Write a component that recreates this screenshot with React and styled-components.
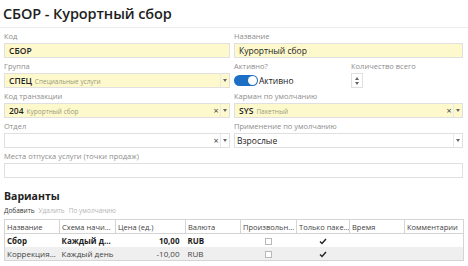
import React from 'react';
import styled, { createGlobalStyle } from 'styled-components';

const GlobalStyle = createGlobalStyle`
    body {
        margin: 0;
        background: #ffffff;
        font-family: "Open Sans", "Noto Sans", sans-serif;
        color: #222;
    }
`;

const Page = styled.div`
    width: 468px;
    height: 266px;
    overflow: hidden;
`;

const Header = styled.div`
    height: 27px;
    border-bottom: 1px solid #ececec;
    padding-left: 3px;
    display: flex;
    align-items: center;
`;

const Title = styled.h1`
    margin: 0;
    font-size: 14.5px;
    font-weight: 600;
    letter-spacing: -0.1px;
    color: #1e1e1e;
`;

const Body = styled.div`
    padding: 2px 5px 0 4px;
`;

const FormGrid = styled.div`
    display: grid;
    grid-template-columns: 226px 229px;
    column-gap: 4px;
    row-gap: 2px;
`;

const Field = styled.div`
    grid-column: ${p => (p.$wide ? '1 / 3' : 'auto')};
    display: flex;
    flex-direction: column;
`;

const SplitCell = styled.div`
    display: grid;
    grid-template-columns: 117px 1fr;
`;

const Label = styled.div`
    height: 13px;
    line-height: 13px;
    font-size: 7.5px;
    color: #8d8d8d;
    white-space: nowrap;
`;

const InputBox = styled.div`
    height: 15px;
    box-sizing: border-box;
    border: 1px solid #e0e0e0;
    background: ${p => (p.$filled ? '#fdf9cc' : '#ffffff')};
    display: flex;
    align-items: center;
    padding-left: ${p => p.$pad ?? 4}px;
    font-size: 8.5px;
    color: #222;
`;

const Value = styled.span`
    flex: 1;
    white-space: nowrap;
    overflow: hidden;
    font-weight: ${p => (p.$strong ? 600 : 400)};
`;

const Code = styled.span`
    font-weight: 600;
`;

const Hint = styled.span`
    font-size: 6.5px;
    color: #9a9a7a;
    margin-left: 3px;
    font-weight: 400;
`;

const ClearBtn = styled.span`
    width: 8px;
    height: 100%;
    display: flex;
    align-items: center;
    justify-content: center;
    font-size: 9px;
    color: #444;
`;

const ArrowBtn = styled.span`
    width: 8px;
    height: 100%;
    border-left: 1px solid #e8e8e8;
    display: flex;
    align-items: center;
    justify-content: center;
`;

const Toggle = styled.div`
    display: flex;
    align-items: center;
    height: 15px;
    gap: 1px;
    font-size: 8.5px;
    color: #222;
`;

const Switch = styled.span`
    width: 24px;
    height: 11px;
    border-radius: 6px;
    background: #1d6ec5;
    display: flex;
    align-items: center;
    justify-content: flex-end;
    padding-right: 1px;
    box-sizing: border-box;
`;

const Knob = styled.span`
    width: 9px;
    height: 9px;
    border-radius: 50%;
    background: #ffffff;
`;

const Spinner = styled.div`
    width: 12px;
    height: 15px;
    box-sizing: border-box;
    border: 1px solid #e0e0e0;
    display: flex;
    flex-direction: column;
    align-items: center;
    justify-content: center;
    gap: 2px;
`;

const SectionTitle = styled.h2`
    margin: 11px 0 0 0;
    font-size: 10.5px;
    font-weight: 700;
    line-height: 14px;
    color: #222;
`;

const Toolbar = styled.div`
    display: flex;
    gap: 4px;
    height: 12px;
    margin-top: 1px;
    align-items: center;
    font-size: 6.5px;
`;

const ToolAction = styled.span`
    color: ${p => (p.$disabled ? '#b4b4b4' : '#333')};
`;

const Table = styled.table`
    margin-top: 3px;
    width: 459px;
    table-layout: fixed;
    border-collapse: collapse;
    border: 1px solid #d4d4d4;
    font-size: 8px;
`;

const Th = styled.th`
    height: 13px;
    padding: 0 2px;
    font-size: 7.5px;
    font-weight: 400;
    color: #444;
    text-align: left;
    white-space: nowrap;
    overflow: hidden;
    border: 1px solid #d4d4d4;
`;

const Row = styled.tr`
    background: ${p => (p.$alt ? '#efefef' : '#ffffff')};
    font-weight: ${p => (p.$bold ? 700 : 400)};
    color: ${p => (p.$bold ? '#1e1e1e' : '#444')};
`;

const Td = styled.td`
    height: 13px;
    padding: 0 ${p => (p.$right ? 6 : 2)}px 0 2px;
    white-space: nowrap;
    overflow: hidden;
    text-align: ${p => (p.$right ? 'right' : p.$center ? 'center' : 'left')};
    vertical-align: middle;
`;

const Box = styled.span`
    display: inline-block;
    width: 7px;
    height: 7px;
    box-sizing: border-box;
    border: 1px solid #b8b8b8;
    background: #fff;
    vertical-align: middle;
`;

const Arrow = ({ up }) => (
    <svg width="4" height="3" viewBox="0 0 4 3">
        <path d={up ? 'M0 3 L2 0 L4 3 Z' : 'M0 0 L4 0 L2 3 Z'} fill="#666" />
    </svg>
);

const Check = () => (
    <svg width="8" height="7" viewBox="0 0 8 7" style={{ verticalAlign: 'middle' }}>
        <path d="M1 3.5 L3 5.5 L7 1" fill="none" stroke="#222" strokeWidth="1.4" />
    </svg>
);

const SelectInput = ({ filled, children, clear, pad }) => (
    <InputBox $filled={filled} $pad={pad}>
        <Value>{children}</Value>
        {clear && <ClearBtn>×</ClearBtn>}
        <ArrowBtn><Arrow /></ArrowBtn>
    </InputBox>
);

const columns = ['Название', 'Схема начи...', 'Цена (ед.)', 'Валюта', 'Произвольн...', 'Только паке...', 'Время', 'Комментарии'];
const widths = [55, 56, 70, 55, 56, 53, 55, 59];

const rows = [
    { name: 'Сбор', scheme: 'Каждый д...', price: '10,00', cur: 'RUB', bold: true },
    { name: 'Коррекция...', scheme: 'Каждый день', price: '-10,00', cur: 'RUB', alt: true },
];

export default function App() {
    return (
        <Page>
            <GlobalStyle />
            <Header>
                <Title>СБОР - Курортный сбор</Title>
            </Header>
            <Body>
                <FormGrid>
                    <Field>
                        <Label>Код</Label>
                        <InputBox $filled><Value $strong>СБОР</Value></InputBox>
                    </Field>
                    <Field>
                        <Label>Название</Label>
                        <InputBox $filled><Value>Курортный сбор</Value></InputBox>
                    </Field>

                    <Field>
                        <Label>Группа</Label>
                        <SelectInput filled>
                            <Code>СПЕЦ</Code><Hint>Специальные услуги</Hint>
                        </SelectInput>
                    </Field>
                    <SplitCell>
                        <Field>
                            <Label>Активно?</Label>
                            <Toggle>
                                <Switch><Knob /></Switch>
                                Активно
                            </Toggle>
                        </Field>
                        <Field>
                            <Label>Количество всего</Label>
                            <Spinner><Arrow up /><Arrow /></Spinner>
                        </Field>
                    </SplitCell>

                    <Field>
                        <Label>Код транзакции</Label>
                        <SelectInput filled clear>
                            <Code>204</Code><Hint>Курортный сбор</Hint>
                        </SelectInput>
                    </Field>
                    <Field>
                        <Label>Карман по умолчанию</Label>
                        <SelectInput filled clear>
                            <Code>SYS</Code><Hint>Пакетный</Hint>
                        </SelectInput>
                    </Field>

                    <Field>
                        <Label>Отдел</Label>
                        <SelectInput clear />
                    </Field>
                    <Field>
                        <Label>Применение по умолчанию</Label>
                        <SelectInput pad={2}>Взрослые</SelectInput>
                    </Field>

                    <Field $wide>
                        <Label>Места отпуска услуги (точки продаж)</Label>
                        <InputBox />
                    </Field>
                </FormGrid>

                <SectionTitle>Варианты</SectionTitle>
                <Toolbar>
                    <ToolAction>Добавить</ToolAction>
                    <ToolAction $disabled>Удалить</ToolAction>
                    <ToolAction $disabled>По умолчанию</ToolAction>
                </Toolbar>
                <Table>
                    <colgroup>
                        {widths.map((w, i) => <col key={i} style={{ width: w }} />)}
                    </colgroup>
                    <thead>
                        <tr>{columns.map(c => <Th key={c}>{c}</Th>)}</tr>
                    </thead>
                    <tbody>
                        {rows.map(r => (
                            <Row key={r.name} $alt={r.alt} $bold={r.bold}>
                                <Td>{r.name}</Td>
                                <Td>{r.scheme}</Td>
                                <Td $right>{r.price}</Td>
                                <Td>{r.cur}</Td>
                                <Td $center><Box /></Td>
                                <Td $center><Check /></Td>
                                <Td />
                                <Td />
                            </Row>
                        ))}
                    </tbody>
                </Table>
            </Body>
        </Page>
    );
}
